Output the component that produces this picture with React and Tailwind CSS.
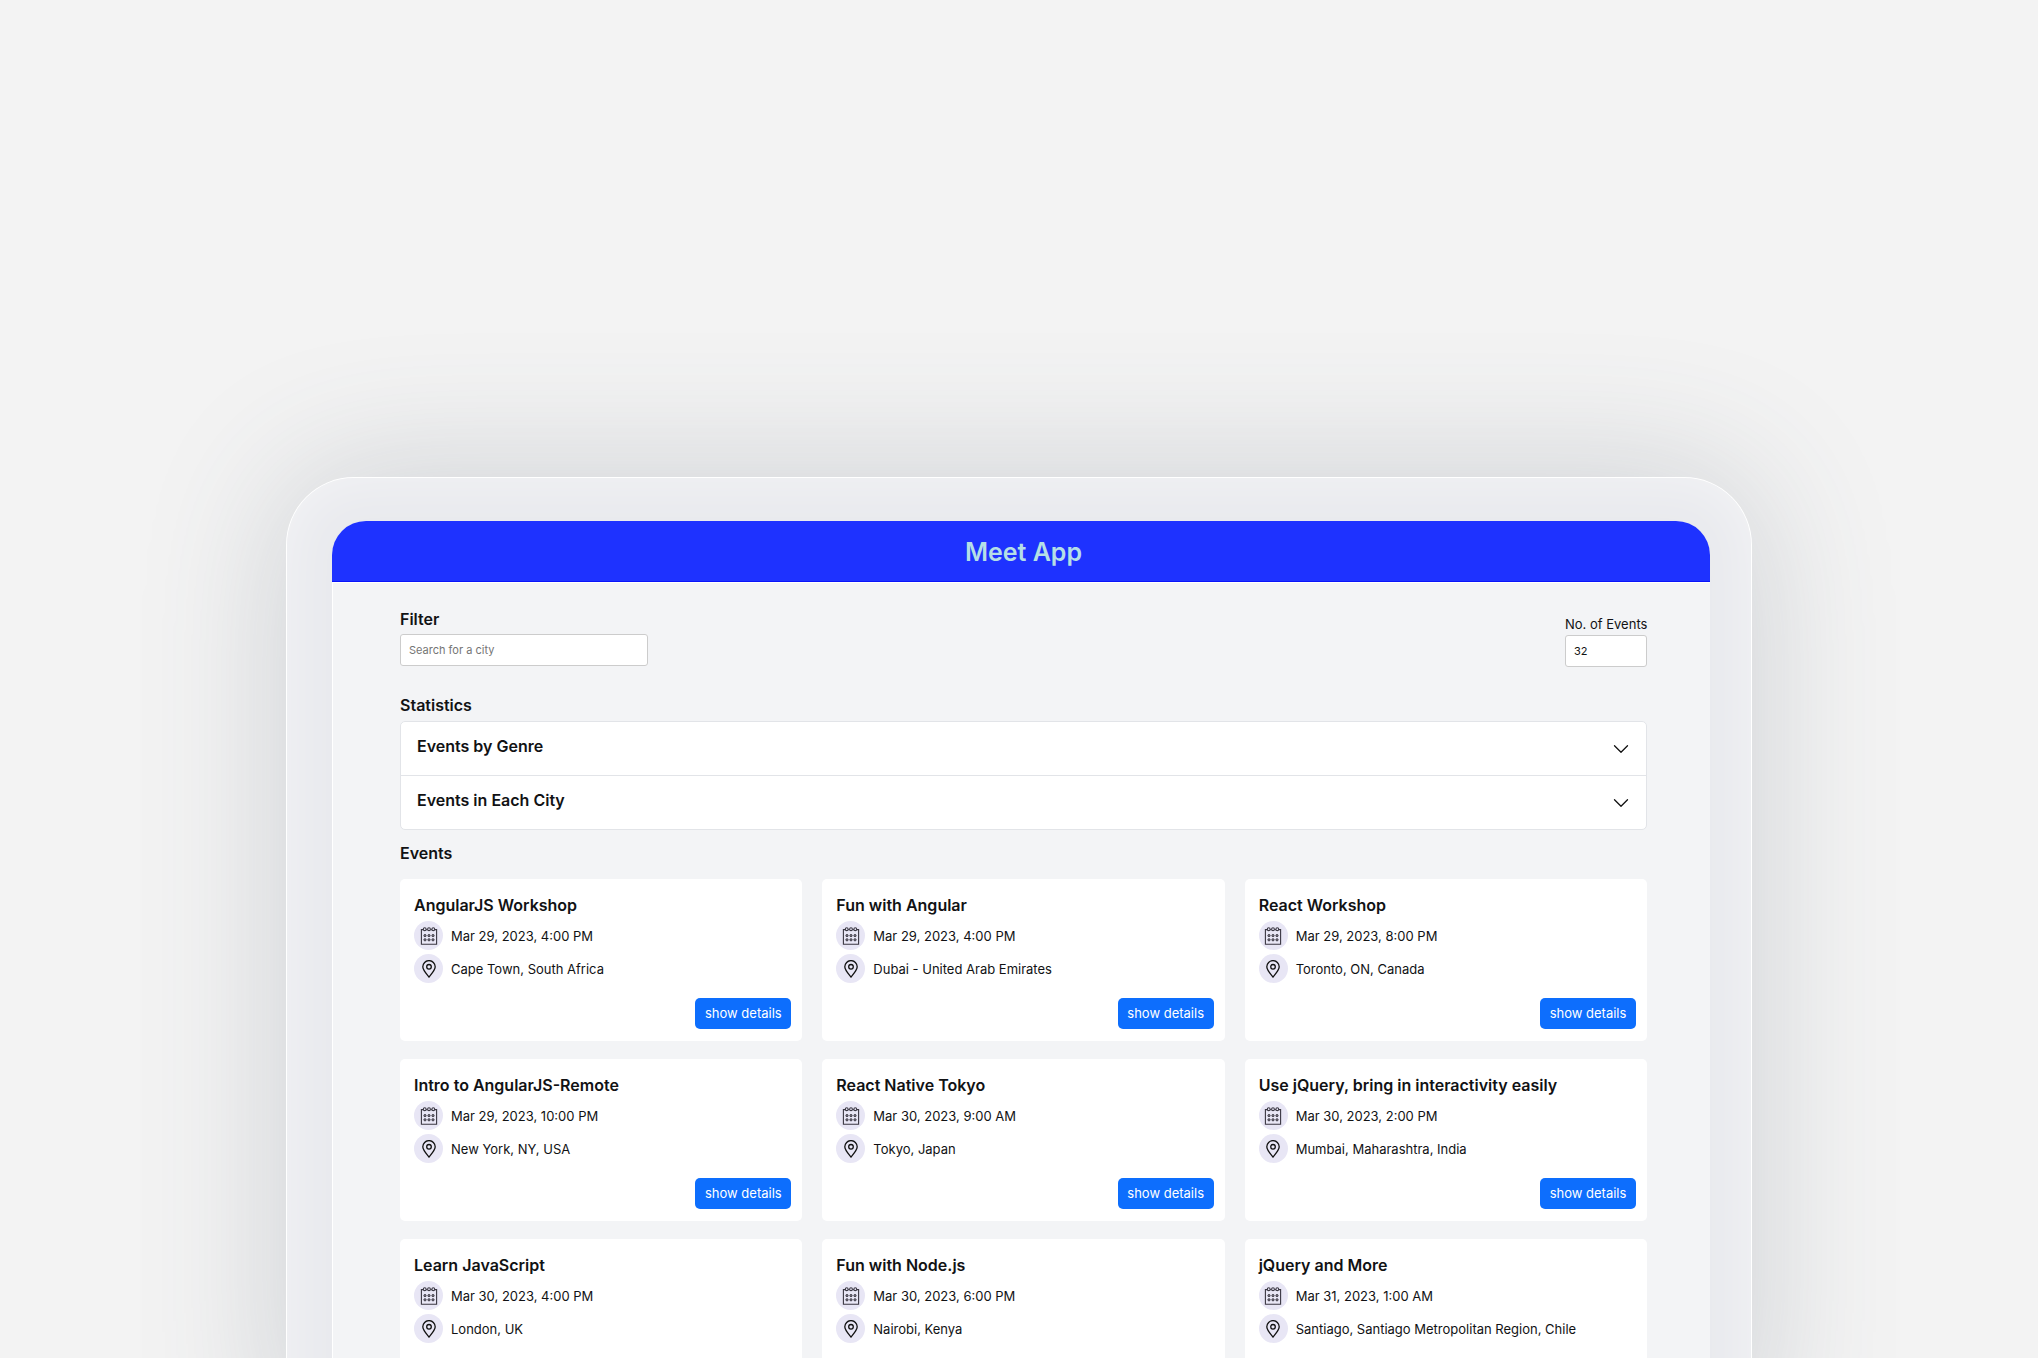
import React, { useState } from "react";
import { clsx } from "clsx";

const EVENTS = [
  { id: 1, summary: "AngularJS Workshop", date: "Mar 29, 2023, 4:00 PM", location: "Cape Town, South Africa" },
  { id: 2, summary: "Fun with Angular", date: "Mar 29, 2023, 4:00 PM", location: "Dubai - United Arab Emirates" },
  { id: 3, summary: "React Workshop", date: "Mar 29, 2023, 8:00 PM", location: "Toronto, ON, Canada" },
  { id: 4, summary: "Intro to AngularJS-Remote", date: "Mar 29, 2023, 10:00 PM", location: "New York, NY, USA" },
  { id: 5, summary: "React Native Tokyo", date: "Mar 30, 2023, 9:00 AM", location: "Tokyo, Japan" },
  { id: 6, summary: "Use jQuery, bring in interactivity easily", date: "Mar 30, 2023, 2:00 PM", location: "Mumbai, Maharashtra, India" },
  { id: 7, summary: "Learn JavaScript", date: "Mar 30, 2023, 4:00 PM", location: "London, UK" },
  { id: 8, summary: "Fun with Node.js", date: "Mar 30, 2023, 6:00 PM", location: "Nairobi, Kenya" },
  { id: 9, summary: "jQuery and More", date: "Mar 31, 2023, 1:00 AM", location: "Santiago, Santiago Metropolitan Region, Chile" },
];

const CalendarIcon = () => (
  <svg viewBox="0 0 18 18" className="size-[18px]" fill="none" stroke="#3a3742" aria-hidden="true">
    <path d="M3.2 2.6H1.4v14.6h15.2V2.6h-1.8M6.2 2.6h1M10.8 2.6h1" strokeWidth="1.1" />
    {[4.7, 9, 13.3].map((x) => (
      <circle key={x} cx={x} cy="2.2" r="1.4" strokeWidth="1.1" />
    ))}
    {[8.6, 12.8].map((y) =>
      [5, 9, 13].map((x) => <circle key={`${x}-${y}`} cx={x} cy={y} r="1.1" fill="#8d8a96" strokeWidth="1" />)
    )}
  </svg>
);

const PinIcon = () => (
  <svg viewBox="0 0 18 18" className="size-[18px]" fill="none" stroke="#111" strokeWidth="1.3" aria-hidden="true">
    <path d="M9 17C6.6 14 2.8 10.2 2.8 6.8a6.2 6.2 0 0 1 12.4 0C15.2 10.2 11.4 14 9 17Z" />
    <circle cx="9" cy="6.8" r="2.3" />
  </svg>
);

const ChevronIcon = ({ className }) => (
  <svg viewBox="0 0 16 16" className={clsx("size-4", className)} fill="none" stroke="#111" strokeWidth="1.3" strokeLinecap="round" strokeLinejoin="round" aria-hidden="true">
    <path d="M1.5 4.8 8 11.2l6.5-6.4" />
  </svg>
);

const InfoRow = ({ icon, children }) => (
  <div className="flex items-center gap-2">
    <span className="flex size-[29px] shrink-0 items-center justify-center rounded-full bg-[#e8e6f5]">
      {icon}
    </span>
    <span className="text-[13px] leading-5">{children}</span>
  </div>
);

const EventCard = ({ event }) => {
  const [showDetails, setShowDetails] = useState(false);

  return (
    <li className="flex flex-col rounded-[5px] bg-white pt-3.5 pr-[11px] pb-3 pl-3.5">
      <h3 className="mb-1 text-base leading-6 font-semibold">{event.summary}</h3>
      <div className="flex flex-col gap-1">
        <InfoRow icon={<CalendarIcon />}>{event.date}</InfoRow>
        <InfoRow icon={<PinIcon />}>{event.location}</InfoRow>
      </div>
      {showDetails && <p className="mt-3 text-[13px]">{event.summary} in {event.location}</p>}
      <button
        type="button"
        onClick={() => setShowDetails(!showDetails)}
        className="mt-[15px] h-[31px] w-24 self-end rounded-[5px] bg-[#0d6efd] text-[13px] text-white"
      >
        {showDetails ? "hide details" : "show details"}
      </button>
    </li>
  );
};

const AccordionItem = ({ title, children }) => {
  const [open, setOpen] = useState(false);

  return (
    <div>
      <button
        type="button"
        aria-expanded={open}
        onClick={() => setOpen(!open)}
        className="flex h-[53px] w-full items-center justify-between pr-[17px] pl-4 text-left"
      >
        <span className="pb-1.5 text-base leading-6 font-semibold">{title}</span>
        <ChevronIcon className={open && "rotate-180"} />
      </button>
      {open && <div className="px-4 pb-4 text-[13px]">{children}</div>}
    </div>
  );
};

const App = () => {
  const [query, setQuery] = useState("");
  const [count, setCount] = useState(32);

  const events = EVENTS.filter((e) => e.location.toLowerCase().includes(query.toLowerCase())).slice(0, count);

  return (
    <div className="h-screen overflow-hidden bg-[#f3f3f3] px-6 pt-[477px] font-['Inter',sans-serif] text-[#111214]">
      {/* Tablet frame */}
      <div className="mx-auto max-w-[1466px] rounded-t-[68px] border border-b-0 border-white bg-[#e9eaee] pt-[43px] pr-[41px] pl-[45px] shadow-[0_0_144px_0_rgba(70,80,98,0.22),inset_0_0_60px_rgba(255,255,255,0.5)]">
        <div className="overflow-hidden rounded-t-[34px] bg-[#f3f4f6]">
          <header className="flex h-[61px] items-center justify-center border-b border-[#0a14fa] bg-[#1e32ff] px-4 pt-0.5 md:pr-[63px] md:pl-[68px]">
            <h1 className="text-[25px] leading-8 font-semibold text-[#b5dfe6]">Meet App</h1>
          </header>

          <main className="border-t border-l border-white px-4 pt-6 pb-10 md:pr-[63px] md:pl-[67px]">
            {/* Filters */}
            <div className="flex items-start justify-between">
              <div>
                <label htmlFor="city" className="mb-[3px] block text-base leading-6 font-semibold">Filter</label>
                <input
                  id="city"
                  type="text"
                  placeholder="Search for a city"
                  value={query}
                  onChange={(e) => setQuery(e.target.value)}
                  className="block h-8 w-[248px] rounded-[3px] border border-[#ccc] bg-white px-2 text-[11px] placeholder:text-[#757575]"
                />
              </div>
              <div className="w-[82px] pt-[7px]">
                <label htmlFor="count" className="mb-px block text-[13px] leading-5 whitespace-nowrap">No. of Events</label>
                <input
                  id="count"
                  type="text"
                  inputMode="numeric"
                  value={count}
                  onChange={(e) => setCount(parseInt(e.target.value) || 0)}
                  className="block h-8 w-full rounded-[3px] border border-[#ccc] bg-white px-2 text-[11px]"
                />
              </div>
            </div>

            {/* Statistics */}
            <h2 className="mt-[26px] mb-1 text-base leading-6 font-semibold">Statistics</h2>
            <div className="divide-y divide-[#e2e4e8] rounded-[5px] border border-[#e2e4e8] bg-white">
              <AccordionItem title="Events by Genre">JavaScript, React, Node, jQuery and Angular</AccordionItem>
              <AccordionItem title="Events in Each City">{EVENTS.length} cities</AccordionItem>
            </div>

            {/* Event list */}
            <h2 className="mt-[11px] mb-3.5 text-base leading-6 font-semibold">Events</h2>
            <ul className="grid gap-x-5 gap-y-[18px] md:grid-cols-2 lg:grid-cols-3">
              {events.map((event) => (
                <EventCard key={event.id} event={event} />
              ))}
            </ul>
          </main>
        </div>
      </div>
    </div>
  );
};

export default App;
